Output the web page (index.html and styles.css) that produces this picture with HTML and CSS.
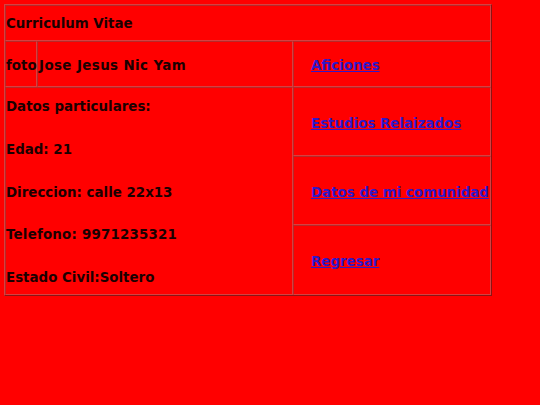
FILE: index.html
```html
<!DOCTYPE html>
<html>
<head>
<meta charset="utf-8">
<title>Curriculum Vitae</title>
<link rel="stylesheet" href="styles.css">
</head>
<body>
<div class="cv">
  <div class="cell title">Curriculum Vitae</div>
  <div class="cell foto">foto</div>
  <div class="cell name">Jose Jesus Nic Yam</div>
  <div class="cell link first"><a href="#">Aficiones</a></div>
  <div class="cell datos">
    <p>Datos particulares:</p>
    <p>Edad: 21</p>
    <p>Direccion: calle 22x13</p>
    <p>Telefono: 9971235321</p>
    <p>Estado Civil:Soltero</p>
  </div>
  <div class="cell link"><a href="#">Estudios Relaizados</a></div>
  <div class="cell link"><a href="#">Datos de mi comunidad</a></div>
  <div class="cell link"><a href="#">Regresar</a></div>
</div>
</body>
</html>
```

FILE: styles.css
```css
html, body {
  background: #ff0000;
}
body {
  margin: 4px;
  font-family: "DejaVu Sans", Verdana, sans-serif;
  font-weight: bold;
  font-size: 13.4px;
  color: #1a0000;
}
.cv {
  display: grid;
  grid-template-columns: 32px 256px 198px;
  grid-template-rows: 36px 46px 69px 69px 70px;
  width: 486px;
  border: 1px solid;
  border-color: #d84040 #8c1414 #8c1414 #d84040;
}
.cell {
  box-sizing: border-box;
  border: 1px solid;
  border-color: #b82828 #d84040 #d84040 #b82828;
  display: flex;
  align-items: center;
  padding: 0;
  white-space: nowrap;
}
.title {
  grid-column: 1 / 4;
  padding-top: 1px;
}
.foto {
  grid-column: 1;
  padding-top: 2px;
}
.name {
  grid-column: 2;
  padding-left: 1px;
  padding-top: 2px;
  letter-spacing: 0.4px;
}
.link {
  grid-column: 3;
  padding-left: 17px;
  padding-top: 3px;
}
.link.first {
  padding-top: 2px;
}
.datos {
  grid-column: 1 / 3;
  grid-row: 3 / 6;
  flex-direction: column;
  align-items: flex-start;
  justify-content: space-between;
  padding: 10px 0 8px 0;
}
.datos p {
  margin: 0;
  line-height: 17px;
}
.datos p:nth-child(4) {
  letter-spacing: 0.2px;
}
a {
  color: #3018c8;
  text-decoration: underline;
}
```
